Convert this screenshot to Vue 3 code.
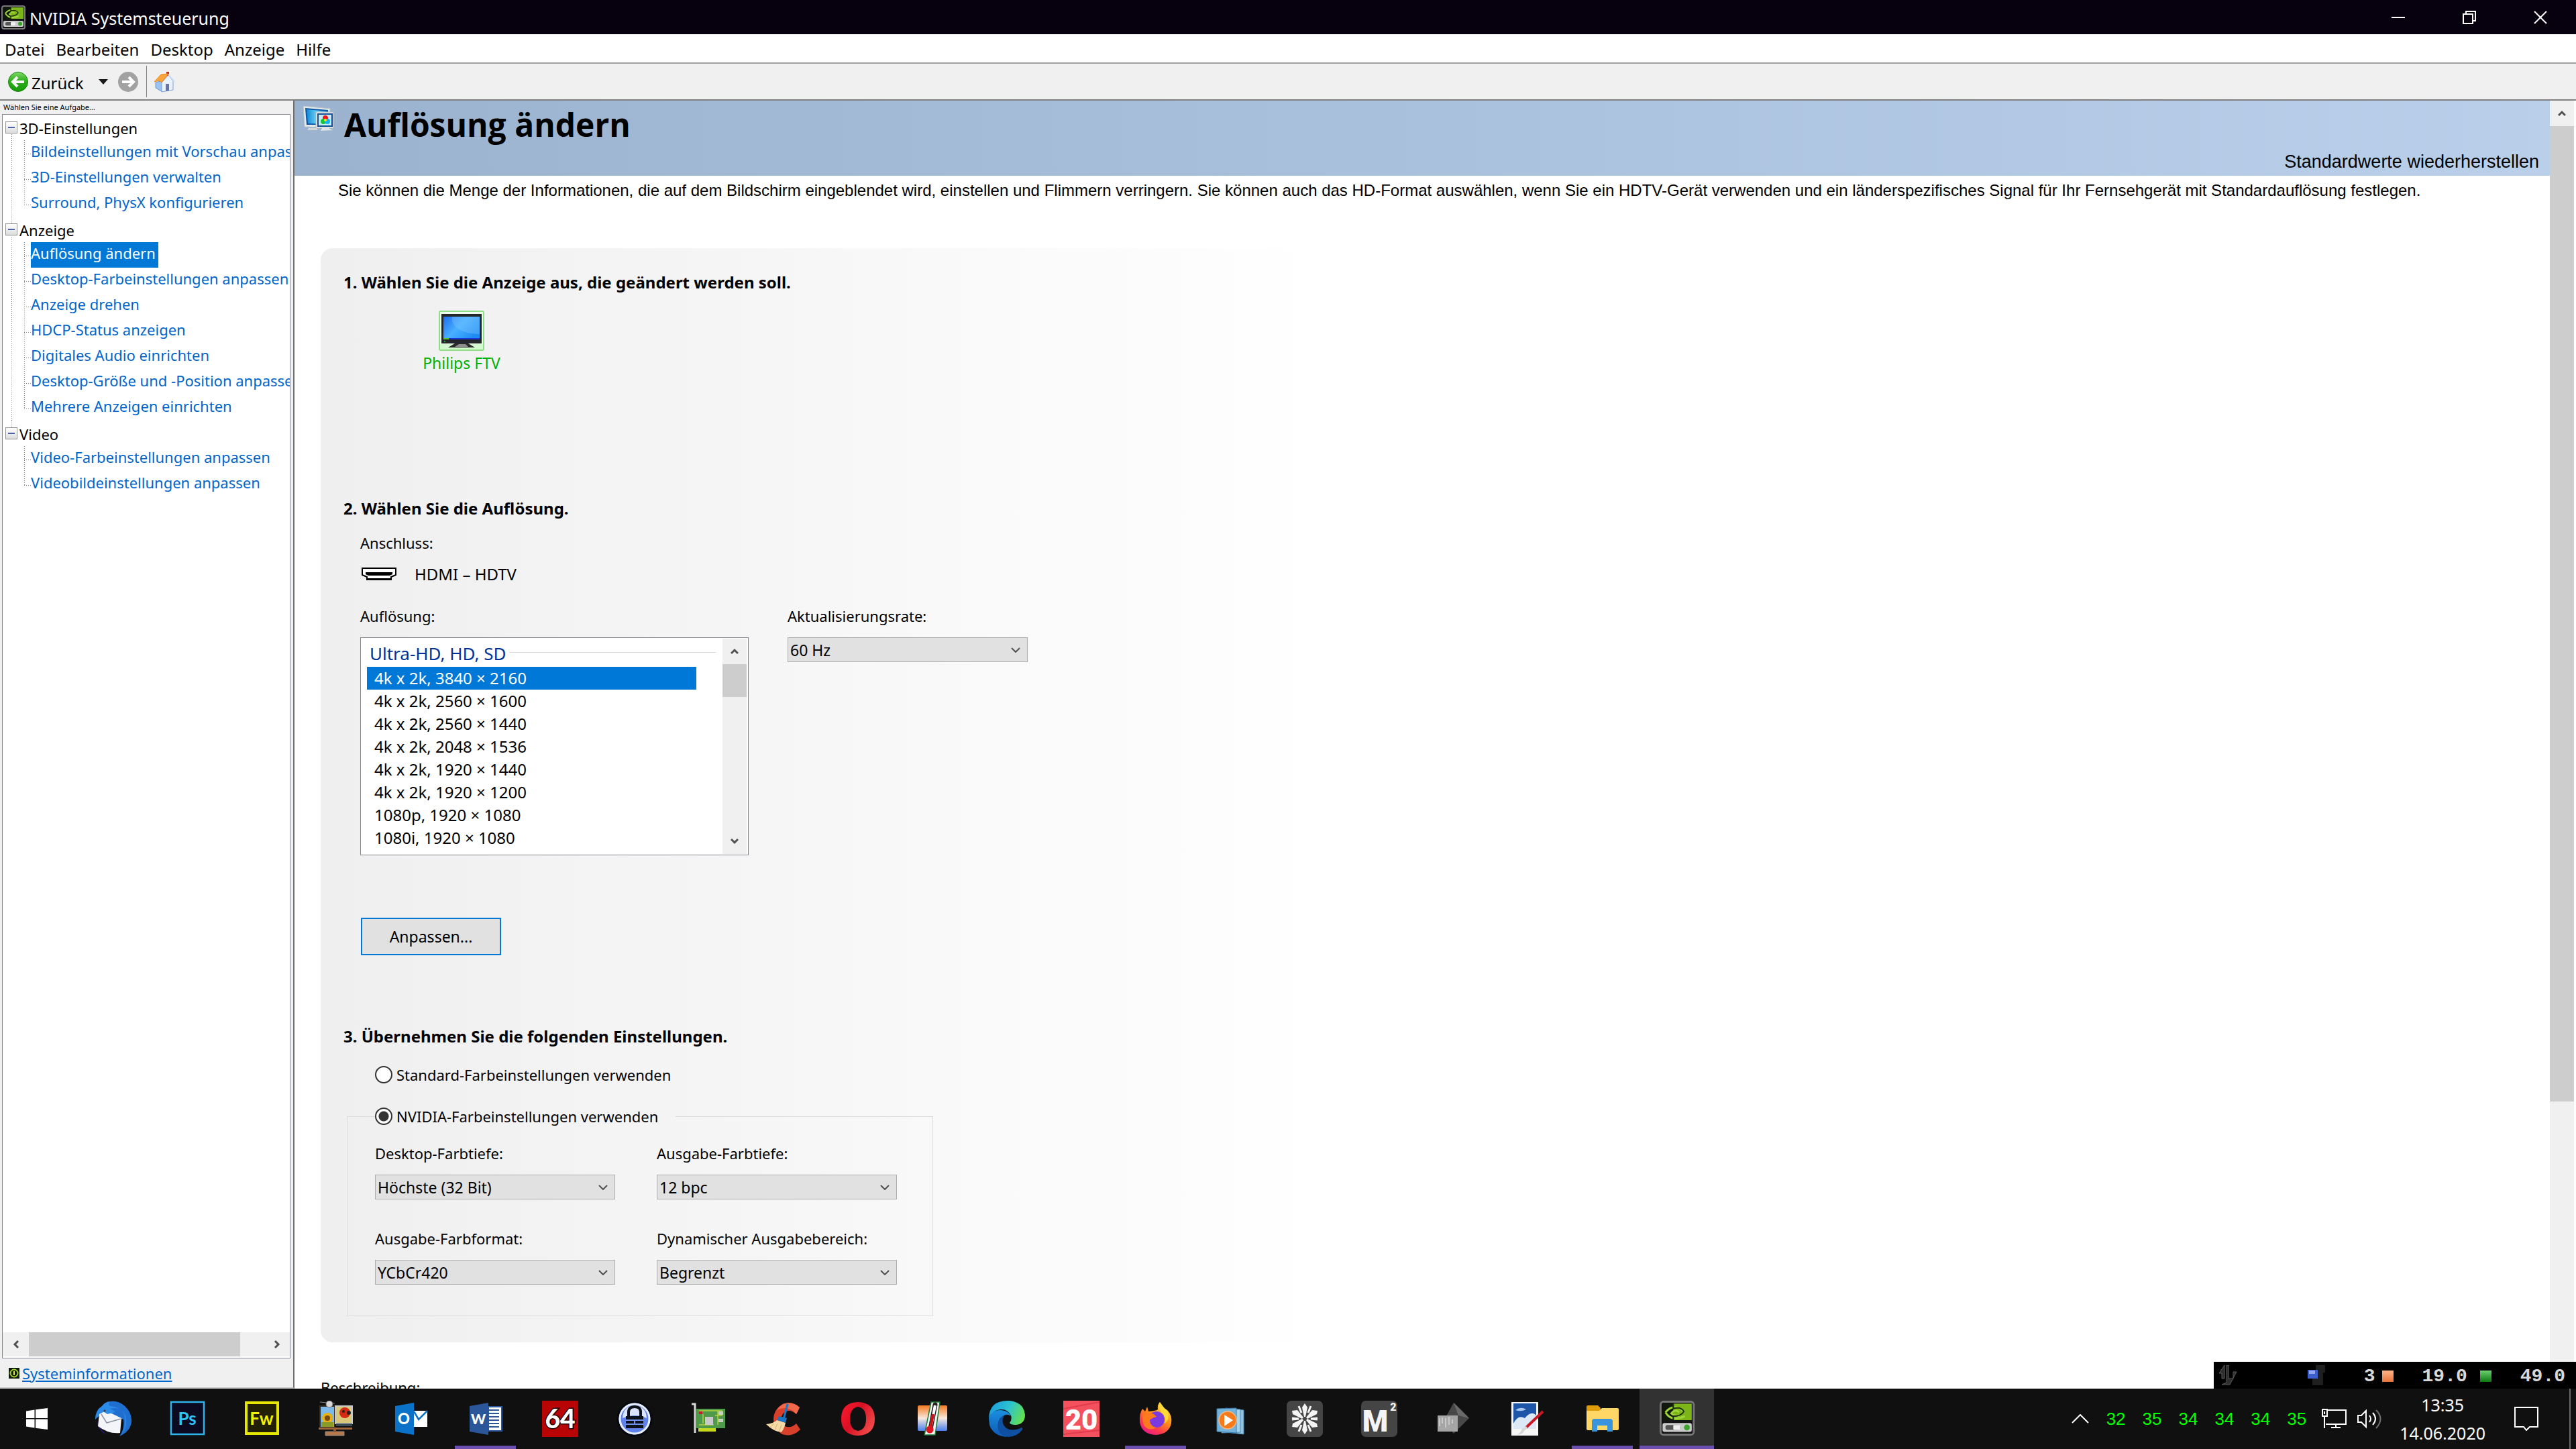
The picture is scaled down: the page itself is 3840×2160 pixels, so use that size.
<template>
  <div class="desktop">
    <header class="titlebar">
      <svg class="app-icon" viewBox="0 0 36 36" v-html="nvidiaIcon"></svg>
      <h1 class="window-title">NVIDIA Systemsteuerung</h1>
      <div class="window-controls">
        <button type="button" aria-label="Minimieren">
          <svg viewBox="0 0 20 20"><path d="M0 10H20" /></svg>
        </button>
        <button type="button" aria-label="Verkleinern">
          <svg viewBox="0 0 20 20"><path d="M1 5H15V19H1ZM5 5V1H19V15H15" /></svg>
        </button>
        <button type="button" aria-label="Schließen">
          <svg viewBox="0 0 20 20"><path d="M1 1L19 19M19 1L1 19" /></svg>
        </button>
      </div>
    </header>

    <nav class="menubar">
      <button v-for="entry in menu" :key="entry" type="button">{{ entry }}</button>
    </nav>

    <div class="toolbar">
      <button type="button" class="back">
        <svg viewBox="0 0 30 30">
          <defs>
            <linearGradient id="backGreen" x1="0" y1="0" x2="0" y2="1">
              <stop offset="0" stop-color="#7fd66a" />
              <stop offset="0.45" stop-color="#2fb01c" />
              <stop offset="1" stop-color="#159a08" />
            </linearGradient>
          </defs>
          <circle cx="15" cy="15" r="14.5" fill="url(#backGreen)" stroke="#158a0a" />
          <path d="M24 15H8M14 8L7 15L14 22" fill="none" stroke="#fff" stroke-width="4" />
        </svg>
        <span>Zurück</span>
      </button>
      <button type="button" class="history" aria-label="Verlauf">
        <svg viewBox="0 0 14 8"><path d="M0 0H14L7 8Z" fill="#1a1a1a" /></svg>
      </button>
      <button type="button" class="forward" aria-label="Vorwärts">
        <svg viewBox="0 0 30 30">
          <circle cx="15" cy="15" r="15" fill="#a2a2a2" />
          <path d="M6 15H22M16 8L23 15L16 22" fill="none" stroke="#fff" stroke-width="4" />
        </svg>
      </button>
      <span class="separator"></span>
      <button type="button" class="home" aria-label="Startseite">
        <svg viewBox="0 0 32 32">
          <path d="M3 17L13 14V31L3 25Z" fill="#9cc3ee" stroke="#6b96d0" />
          <path d="M12 31V17L22 6L29 15V28Z" fill="#e9f1fc" stroke="#7ba0d6" />
          <path d="M18 30V19H23V29Z" fill="#6673a8" />
          <path d="M19 1H23V7H19Z" fill="#c4301c" />
          <path d="M1 16L11 5L22 4L12 17L8 14Z" fill="#f7a53c" stroke="#e88a1c" />
          <path d="M22 5L31 16" stroke="#cfdcef" stroke-width="2" />
        </svg>
      </button>
    </div>

    <div class="workspace">
      <aside class="sidebar">
        <p class="task-hint">Wählen Sie eine Aufgabe...</p>
        <div class="tree-box">
          <ul class="tree">
            <li v-for="group in tree" :key="group.title" class="tree-group">
              <div class="tree-heading">
                <button type="button" class="toggle" :aria-label="group.title"></button>
                <span>{{ group.title }}</span>
              </div>
              <ul class="tree-items">
                <li v-for="item in group.items" :key="item">
                  <a href="#" :class="{ selected: item === activeItem }" @click.prevent="activeItem = item">{{ item }}</a>
                </li>
              </ul>
            </li>
          </ul>
          <div class="hscroll">
            <button type="button" aria-label="Links">
              <svg viewBox="0 0 10 12"><path d="M8 1L3 6L8 11" /></svg>
            </button>
            <div class="hscroll-track"><div class="hscroll-thumb"></div></div>
            <button type="button" aria-label="Rechts">
              <svg viewBox="0 0 10 12"><path d="M2 1L7 6L2 11" /></svg>
            </button>
          </div>
        </div>
        <div class="sysinfo">
          <svg viewBox="0 0 16 16">
            <rect width="16" height="16" fill="#101a08" />
            <circle cx="8" cy="8" r="5.5" fill="none" stroke="#9bd026" stroke-width="2" />
            <path d="M8 5V11M7 7H8" stroke="#d7ee4a" stroke-width="2" />
          </svg>
          <a href="#">Systeminformationen</a>
        </div>
      </aside>

      <main class="page">
        <div class="page-content">
          <div class="page-header">
            <svg class="page-icon" viewBox="0 0 46 38">
              <defs>
                <linearGradient id="screenCyan" x1="0" y1="0" x2="1" y2="0">
                  <stop offset="0" stop-color="#1287d8" />
                  <stop offset="0.6" stop-color="#7be0f8" />
                  <stop offset="1" stop-color="#2aa5e4" />
                </linearGradient>
              </defs>
              <path d="M0 0L40 4V32L2 31Z" fill="#e4eaec" stroke="#b9c3c8" />
              <path d="M3 3L37 6V28L5 28Z" fill="#0a57a6" />
              <path d="M5 5L35 8V27L7 26Z" fill="url(#screenCyan)" />
              <path d="M19 9H45V33H19Z" fill="#f2f4f5" stroke="#a9b2b6" />
              <path d="M22 12H43V30H22Z" fill="#c4ecfa" stroke="#134f94" stroke-width="2" />
              <circle cx="33" cy="18" r="4" fill="#f01414" />
              <circle cx="30" cy="23" r="4" fill="#18c832" />
              <circle cx="36" cy="23" r="4" fill="#12b4f0" />
              <circle cx="33" cy="21" r="2" fill="#ffe01a" />
              <path d="M28 33H38L44 36L26 37Z" fill="#dfe3e4" />
              <path d="M8 33H20L22 36L6 36Z" fill="#cfd6d8" />
            </svg>
            <h2>Auflösung ändern</h2>
            <button type="button" class="restore">Standardwerte wiederherstellen</button>
          </div>
          <p class="intro">
            Sie können die Menge der Informationen, die auf dem Bildschirm eingeblendet wird, einstellen und Flimmern verringern. Sie können auch das HD-Format auswählen, wenn Sie ein HDTV-Gerät verwenden und ein länderspezifisches Signal für Ihr Fernsehgerät mit Standardauflösung festlegen.
          </p>

          <div class="panel">
            <section class="step-display">
              <h3>1. Wählen Sie die Anzeige aus, die geändert werden soll.</h3>
              <button type="button" class="display">
                <svg viewBox="0 0 68 60">
                  <defs>
                    <linearGradient id="tvBlue" x1="0" y1="0" x2="1" y2="0.6">
                      <stop offset="0" stop-color="#1f6ff0" />
                      <stop offset="0.5" stop-color="#49b0ff" />
                      <stop offset="1" stop-color="#1f8cf5" />
                    </linearGradient>
                  </defs>
                  <rect x="1" y="1" width="66" height="58" rx="2" fill="#f2fdf1" stroke="#8fdd87" stroke-width="2" />
                  <path d="M2 50H66V58H2Z" fill="#d3f8cf" />
                  <rect x="4" y="5" width="60" height="44" fill="#23272a" />
                  <rect x="7" y="9" width="54" height="34" fill="url(#tvBlue)" />
                  <path d="M20 9C18 26 36 34 61 35V9Z" fill="#7cc6ff" opacity="0.4" />
                  <path d="M7 41H61V43H7Z" fill="#1b37d6" />
                  <path d="M7 41H15V43H7Z" fill="#58c322" />
                  <circle cx="9" cy="46" r="1" fill="#29c22b" />
                  <path d="M24 49H44L54 55H14Z" fill="#2a2a2a" />
                  <path d="M30 50H40L44 54H24Z" fill="#8e8e8e" />
                </svg>
                Philips FTV
              </button>
            </section>

            <section class="step-resolution">
              <h3>2. Wählen Sie die Auflösung.</h3>
              <p class="connector-label">Anschluss:</p>
              <p class="connector">
                <svg viewBox="0 0 52 20">
                  <path d="M1 1H51V11L44 14V18H8V14L1 11Z" fill="#fff" stroke="#000" stroke-width="2" />
                  <path d="M6 7H46V10L42 12H10L6 10Z" />
                  <path d="M8 16H44V19H8Z" />
                </svg>
                HDMI – HDTV
              </p>
              <div class="mode-row">
                <div class="field">
                  <span id="resolution-label">Auflösung:</span>
                  <div class="listbox">
                    <ul role="listbox" aria-labelledby="resolution-label">
                      <li class="list-group">Ultra-HD, HD, SD</li>
                      <li
                        v-for="mode in modes"
                        :key="mode"
                        role="option"
                        class="mode"
                        :class="{ selected: mode === activeMode }"
                        @click="activeMode = mode"
                      >{{ mode }}</li>
                    </ul>
                    <div class="list-scroll">
                      <button type="button" aria-label="Nach oben">
                        <svg viewBox="0 0 12 10"><path d="M1 8L6 3L11 8" /></svg>
                      </button>
                      <div class="list-thumb"></div>
                      <button type="button" aria-label="Nach unten">
                        <svg viewBox="0 0 12 10"><path d="M1 2L6 7L11 2" /></svg>
                      </button>
                    </div>
                  </div>
                </div>
                <div class="field">
                  <label for="rate">Aktualisierungsrate:</label>
                  <div class="combo">
                    <select id="rate"><option>60 Hz</option></select>
                    <svg viewBox="0 0 14 8"><path d="M1 1L7 7L13 1" /></svg>
                  </div>
                </div>
              </div>
              <button type="button" class="customize">Anpassen...</button>
            </section>

            <section class="step-color">
              <h3>3. Übernehmen Sie die folgenden Einstellungen.</h3>
              <label class="radio default-color">
                <input v-model="colorSource" type="radio" name="color" value="default" />
                Standard-Farbeinstellungen verwenden
              </label>
              <fieldset>
                <legend>
                  <label class="radio">
                    <input v-model="colorSource" type="radio" name="color" value="nvidia" />
                    NVIDIA-Farbeinstellungen verwenden
                  </label>
                </legend>
                <div class="color-grid">
                  <div v-for="setting in colorSettings" :key="setting.id" class="field">
                    <label :for="setting.id">{{ setting.label }}</label>
                    <div class="combo">
                      <select :id="setting.id"><option>{{ setting.value }}</option></select>
                      <svg viewBox="0 0 14 8"><path d="M1 1L7 7L13 1" /></svg>
                    </div>
                  </div>
                </div>
              </fieldset>
            </section>
          </div>
          <p class="description">Beschreibung:</p>
        </div>
        <div class="vscroll">
          <button type="button" aria-label="Nach oben">
            <svg viewBox="0 0 12 10"><path d="M1 8L6 3L11 8" /></svg>
          </button>
          <div class="vscroll-track"><div class="vscroll-thumb"></div></div>
        </div>
      </main>

      <div class="monitor-bar">
        <svg class="traffic" viewBox="0 0 28 30">
          <path d="M1 12L9 0V20H5V12ZM12 0H15V20H22V10H27L17 29H5L12 26Z" fill="#2e2e2e" stroke="#5a5a5a" />
        </svg>
        <svg class="net" viewBox="0 0 28 32">
          <path d="M13 1H27V12H24V31H8V16H13Z" fill="#1f1f1f" />
          <rect x="1" y="8" width="15" height="13" fill="#3f5fd0" />
          <rect x="3" y="9" width="9" height="5" fill="#90a6f2" />
        </svg>
        <span class="value processes">3</span>
        <i class="led orange"></i>
        <span class="value">19.0</span>
        <i class="led green"></i>
        <span class="value">49.0</span>
      </div>
    </div>

    <footer class="taskbar">
      <button
        v-for="app in apps"
        :key="app.name"
        type="button"
        class="task"
        :class="{ running: app.running, active: app.active }"
        :aria-label="app.name"
      >
        <svg viewBox="0 0 54 54" v-html="app.icon"></svg>
      </button>
      <div class="tray">
        <svg class="chevron" viewBox="0 0 26 14"><path d="M1 13L13 1L25 13" /></svg>
        <div class="temps">
          <span v-for="(temp, i) in temps" :key="i">{{ temp }}</span>
        </div>
        <svg class="network" viewBox="0 0 38 32">
          <path d="M8 3H36V24H6M21 24V29M14 29H28M1 2H8V12H1ZM4 12V30M4 5V9" />
        </svg>
        <svg class="speaker" viewBox="0 0 38 32">
          <path d="M1 11H6L13 4V28L6 21H1Z" />
          <path d="M18 11Q22 16 18 21M23 7Q31 16 23 25" />
          <path d="M28 3Q41 16 28 30" opacity="0.4" />
        </svg>
        <div class="clock">
          <span>13:35</span>
          <span>14.06.2020</span>
        </div>
        <svg class="notifications" viewBox="0 0 36 36">
          <path d="M1 1H35V30H23L18 35L14 30H1Z" />
        </svg>
        <span class="show-desktop"></span>
      </div>
    </footer>
  </div>
</template>

<script setup>
import { ref } from "vue";

const menu = ["Datei", "Bearbeiten", "Desktop", "Anzeige", "Hilfe"];

const tree = [
  {
    title: "3D-Einstellungen",
    items: [
      "Bildeinstellungen mit Vorschau anpassen",
      "3D-Einstellungen verwalten",
      "Surround, PhysX konfigurieren",
    ],
  },
  {
    title: "Anzeige",
    items: [
      "Auflösung ändern",
      "Desktop-Farbeinstellungen anpassen",
      "Anzeige drehen",
      "HDCP-Status anzeigen",
      "Digitales Audio einrichten",
      "Desktop-Größe und -Position anpassen",
      "Mehrere Anzeigen einrichten",
    ],
  },
  {
    title: "Video",
    items: ["Video-Farbeinstellungen anpassen", "Videobildeinstellungen anpassen"],
  },
];
const activeItem = ref("Auflösung ändern");

const modes = [
  "4k x 2k, 3840 × 2160",
  "4k x 2k, 2560 × 1600",
  "4k x 2k, 2560 × 1440",
  "4k x 2k, 2048 × 1536",
  "4k x 2k, 1920 × 1440",
  "4k x 2k, 1920 × 1200",
  "1080p, 1920 × 1080",
  "1080i, 1920 × 1080",
];
const activeMode = ref(modes[0]);

const colorSource = ref("nvidia");
const colorSettings = [
  { id: "desktop-depth", label: "Desktop-Farbtiefe:", value: "Höchste (32 Bit)" },
  { id: "output-depth", label: "Ausgabe-Farbtiefe:", value: "12 bpc" },
  { id: "output-format", label: "Ausgabe-Farbformat:", value: "YCbCr420" },
  { id: "output-range", label: "Dynamischer Ausgabebereich:", value: "Begrenzt" },
];

const temps = [32, 35, 34, 34, 34, 35];

const nvidiaIcon = `
  <rect x="1" y="1" width="34" height="34" rx="3" fill="#141414" stroke="#777" stroke-width="2"/>
  <path d="M3 3H33V20H3Z" fill="#10180a"/>
  <path d="M14 3H33V20H14Z" fill="#7cb518"/>
  <path d="M6 12Q14 2 25 11Q19 19 12 13Q16 8 20 12M6 12Q12 22 26 16" fill="none" stroke="#9fd63a" stroke-width="2"/>
  <path d="M14 3V8Q22 6 25 11Q22 16 14 16V20" fill="none" stroke="#1f3008" stroke-width="1.5"/>
  <rect x="3" y="23" width="30" height="9" rx="2" fill="#c9c9c9"/>
  <rect x="6" y="25" width="15" height="5" rx="2" fill="#555"/>
  <rect x="14" y="25" width="7" height="5" rx="1" fill="#eee"/>
  <circle cx="28" cy="27.500" r="3" fill="#3aa52a"/>`;

// taskbar glyphs, all drawn on a 54 x 54 grid
const apps = [
  {
    name: "Start",
    icon: `<path d="M11 15.500L23.500 13.500V26H11ZM25 13.300L43 11V26H25ZM11 27.500H23.500V40.500L11 38.500ZM25 27.500H43V43L25 40.800Z" fill="#fff"/>`,
  },
  {
    name: "Thunderbird",
    icon: `
      <path d="M20 2Q32 -2 44 8Q55 18 54 32Q52 46 36 53Q44 42 42 28L10 18Q12 6 20 2Z" fill="#1f6fd0"/>
      <path d="M0 28Q0 14 10 8Q14 2 22 1Q18 6 22 8Q34 8 42 18Q48 30 40 50Q50 34 44 20Q36 8 22 12L4 24Z" fill="#2a8be8"/>
      <path d="M2 30Q4 46 18 51Q8 44 6 38Z" fill="#2b1470"/>
      <path d="M6 20L16 15L39 26L37 48Q20 50 4 38Z" fill="#f4f5f8"/>
      <path d="M9 20L17 33L38 27" fill="none" stroke="#8e95a8" stroke-width="1.500"/>
      <path d="M12 16L18 20L30 17Q22 10 14 12Z" fill="#2a8be8"/>
      <circle cx="14" cy="15" r="1.500" fill="#5a2a10"/>`,
  },
  {
    name: "Photoshop",
    icon: `
      <rect x="2" y="2" width="49" height="48" fill="#0c0a20" stroke="#2fb4ea" stroke-width="2.500"/>
      <text x="26" y="36" text-anchor="middle" font-family="Lato" font-weight="700" font-size="26" fill="#2fc4f4">Ps</text>`,
  },
  {
    name: "Fireworks",
    icon: `
      <rect x="3" y="3" width="47" height="46" fill="#211f04" stroke="#e6e600" stroke-width="4"/>
      <text x="26" y="36" text-anchor="middle" font-family="Lato" font-weight="700" font-size="26" fill="#f2f200">Fw</text>`,
  },
  {
    name: "Bildbetrachter",
    icon: `
      <path d="M2 2L24 4M10 46H38V52H10Z" fill="#b5784a" stroke="#888"/>
      <path d="M22 40H26V47H22Z" fill="#8a5630"/>
      <path d="M2 8H24V40H2Z" fill="#7cb8e8" stroke="#3a2a1c" stroke-width="2"/>
      <circle cx="13" cy="26" r="8" fill="#e8b010"/>
      <circle cx="13" cy="26" r="4" fill="#7a4a08"/>
      <path d="M4 32H22V39H4Z" fill="#8a9a28"/>
      <path d="M25 8H50V34H25Z" fill="#d8c878" stroke="#c8c8c8" stroke-width="2"/>
      <circle cx="39" cy="18" r="8" fill="#d42a14"/>
      <circle cx="45" cy="18" r="3" fill="#222"/>
      <circle cx="37" cy="16" r="2" fill="#222"/>
      <path d="M26 34H50V38H26Z" fill="#3a4a58"/>
      <path d="M0 40H50V43H0Z" fill="#a0673c"/>
      <circle cx="16" cy="5" r="5" fill="#d8d8d8" stroke="#777"/>`,
  },
  {
    name: "Outlook",
    icon: `
      <path d="M3 8L31 3V51L3 46Z" fill="#0a72c8"/>
      <path d="M31 15H51V39H31Z" fill="#fff"/>
      <path d="M31 16L38 28L51 15" fill="none" stroke="#0a72c8" stroke-width="2.500"/>
      <text x="16" y="35" text-anchor="middle" font-family="Lato" font-weight="900" font-size="22" fill="#fff">O</text>`,
  },
  {
    name: "Word",
    running: true,
    icon: `
      <path d="M31 9H51V45H31Z" fill="#fff" stroke="#2b579a" stroke-width="2"/>
      <path d="M31 14H47M31 19H47M31 24H47M31 29H47M31 34H47M31 39H47" stroke="#2b579a" stroke-width="2"/>
      <path d="M3 8L31 3V51L3 46Z" fill="#2b579a"/>
      <text x="16" y="35" text-anchor="middle" font-family="Lato" font-weight="900" font-size="21" fill="#fff">W</text>`,
  },
  {
    name: "AIDA64",
    icon: `
      <rect width="54" height="54" fill="#b80404"/>
      <text x="27" y="41" text-anchor="middle" font-family="Lato" font-weight="900" font-size="39" fill="#fff" stroke="#200" stroke-width="3" paint-order="stroke">64</text>`,
  },
  {
    name: "KeePass",
    icon: `
      <circle cx="27" cy="27" r="25" fill="#a9bdf5" stroke="#05080f" stroke-width="3"/>
      <circle cx="27" cy="27" r="22" fill="#5f83ea" stroke="#e8eefc" stroke-width="3"/>
      <path d="M9 26Q10 8 27 7Q44 8 45 26Q28 18 9 26Z" fill="#dbe4fc"/>
      <path d="M18 25V17Q18 9 27 9Q36 9 36 17V25" fill="none" stroke="#0c1018" stroke-width="4"/>
      <path d="M14 23H40V41H14Z" fill="#0c1018"/>
      <path d="M14 29H40M14 35H40M27 29V35" stroke="#7090ec" stroke-width="2"/>`,
  },
  {
    name: "GPU-Z",
    icon: `
      <path d="M1 5H6V48" fill="none" stroke="#d8d8d8" stroke-width="3"/>
      <path d="M8 12H51V41H8Z" fill="#4f9a4a"/>
      <path d="M11 41H37V46H11Z" fill="#c6d820"/>
      <path d="M12 15H46V22H36M12 36H34M40 15V36M18 20V34" fill="none" stroke="#b8cf3a" stroke-width="1.500"/>
      <path d="M21 24H33V36H21Z" fill="#c9c9c9"/>
      <path d="M41 16H48V21H41ZM41 27H48V32H41Z" fill="#ccd0cc"/>
      <path d="M12 16H17V20H12Z" fill="#c02030"/>`,
  },
  {
    name: "CCleaner",
    icon: `
      <path d="M51 10Q40 0 26 5Q13 12 12 27Q12 42 25 50Q40 55 52 43L46 34Q38 42 29 38Q23 33 24 24Q27 14 37 15Q42 16 46 20Z" fill="#d8402c"/>
      <path d="M51 10Q40 0 26 5Q20 9 17 14Q34 6 46 20Z" fill="#f0694a"/>
      <path d="M33 5L27 28" stroke="#1c76c4" stroke-width="3"/>
      <path d="M20 23L32 26L30 33L17 29Z" fill="#1c76c4"/>
      <path d="M17 29L30 33Q28 42 24 47Q12 46 1 35Q12 34 17 29Z" fill="#f5d9a4"/>
      <path d="M12 34L8 40M18 34L14 44M24 36L20 46" stroke="#d8b070"/>`,
  },
  {
    name: "Opera",
    icon: `
      <defs><linearGradient id="operaRed" x1="0" y1="0" x2="1" y2="0.600">
        <stop offset="0" stop-color="#ff1a30"/><stop offset="0.500" stop-color="#d81024"/><stop offset="1" stop-color="#f04848"/>
      </linearGradient></defs>
      <path fill-rule="evenodd" d="M27 2Q52 3 52 27Q52 51 27 52Q2 51 2 27Q2 3 27 2ZM27 9Q15 11 15 27Q15 43 27 45Q39 43 39 27Q39 11 27 9Z" fill="url(#operaRed)"/>`,
  },
  {
    name: "Core Temp",
    icon: `
      <defs><linearGradient id="heat" x1="0" y1="0" x2="0" y2="1">
        <stop offset="0" stop-color="#f47820"/><stop offset="0.5" stop-color="#f8e8dc"/><stop offset="1" stop-color="#4a80f0"/>
      </linearGradient></defs>
      <rect x="5" y="7" width="44" height="38" rx="2" fill="url(#heat)"/>
      <path d="M25 2H38L31 51H15Z" fill="#f4f4f0" stroke="#1d7a34" stroke-width="1.500"/>
      <path d="M31 6L24 42" stroke="#222" stroke-width="7" stroke-linecap="round"/>
      <path d="M31 7L24 42" stroke="#fff" stroke-width="4"/>
      <path d="M28 20L24 42" stroke="#d01018" stroke-width="4"/>
      <circle cx="23" cy="43" r="5.500" fill="#e01420"/>`,
  },
  {
    name: "Edge",
    icon: `
      <defs>
        <linearGradient id="edgeTop" x1="0" y1="0.300" x2="1" y2="0.600">
          <stop offset="0" stop-color="#1a9bdc"/><stop offset="0.500" stop-color="#2cc3d2"/><stop offset="1" stop-color="#66e04a"/>
        </linearGradient>
        <linearGradient id="edgeLow" x1="0" y1="0" x2="0" y2="1">
          <stop offset="0" stop-color="#1b8fe0"/><stop offset="1" stop-color="#0c59b4"/>
        </linearGradient>
      </defs>
      <path d="M0 26Q1 0 28 0Q52 1 54 21Q54 35 40 36Q32 36 31 33Q35 28 33 22Q28 12 17 13Q4 15 0 26Z" fill="url(#edgeTop)"/>
      <path d="M0 26Q4 14 18 14Q30 15 33 23Q26 18 20 24Q14 32 22 42Q30 52 26 54Q6 52 1 36Z" fill="url(#edgeLow)"/>
      <path d="M23 22Q17 32 25 40Q34 47 49 40Q51 41 50 43Q42 54 29 54Q10 50 14 32Q16 24 23 22Z" fill="#1050a0"/>`,
  },
  {
    name: "Wetter",
    icon: `
      <rect width="54" height="54" fill="#f4505e"/>
      <path d="M0 12L54 2M0 50L54 44" stroke="#e03c4c" stroke-width="2"/>
      <text x="27" y="43" text-anchor="middle" font-family="Roboto" font-weight="900" font-size="42" fill="#fff">20</text>`,
  },
  {
    name: "Firefox",
    running: true,
    icon: `
      <defs>
        <linearGradient id="foxFire" x1="0.800" y1="0" x2="0.200" y2="1">
          <stop offset="0" stop-color="#ffe840"/><stop offset="0.450" stop-color="#ff8a18"/><stop offset="0.750" stop-color="#ff3750"/><stop offset="1" stop-color="#e01890"/>
        </linearGradient>
      </defs>
      <path d="M33 2Q36 10 44 14Q52 22 50 34Q46 50 27 51Q6 50 3 32Q2 20 7 12L11 16L14 9L16 16Q28 15 30 13Q29 6 33 2Z" fill="url(#foxFire)"/>
      <circle cx="28" cy="28" r="12" fill="#7a3ae0"/>
      <path d="M7 20Q16 16 24 20L28 24Q20 26 18 29Q18 38 28 40Q18 46 10 38Q6 30 7 20Z" fill="#ff7a1c"/>
      <path d="M33 2Q30 14 38 20Q42 26 40 34Q48 28 45 16Q38 10 33 2Z" fill="#ffd83a"/>`,
  },
  {
    name: "Media Player",
    icon: `
      <path d="M20 11L47 14V50L20 47Z" fill="#8fc4e4" stroke="#4a88b0"/>
      <path d="M14 12L42 13V47L14 48Z" fill="#a8d4ec" stroke="#4a88b0"/>
      <path d="M7 12L36 11V48L7 46Z" fill="#74b4dc" stroke="#3a7aa8"/>
      <circle cx="23" cy="29" r="13" fill="#f47a1c" stroke="#f8b880" stroke-width="1.500"/>
      <path d="M18 21V38L31 29Z" fill="#fff"/>`,
  },
  {
    name: "Snowflake",
    icon: `
      <rect width="54" height="54" rx="7" fill="#454545"/>
      <g fill="#f4f4f4">
        <path d="M27 4L31 10L28 24H26L23 10ZM27 50L31 44L28 30H26L23 44Z"/>
        <path d="M8 15L16 14L25 25L23 27L9 20ZM46 15L38 14L29 25L31 27L45 20Z"/>
        <path d="M8 39L16 40L25 29L23 27L9 34ZM46 39L38 40L29 29L31 27L45 34Z"/>
      </g>
      <path d="M18 8L22 18M36 8L32 18M18 46L22 36M36 46L32 36M8 26L18 27L8 28M46 26L36 27L46 28" fill="none" stroke="#f4f4f4" stroke-width="3"/>`,
  },
  {
    name: "M2",
    icon: `
      <rect width="54" height="54" rx="7" fill="#454545"/>
      <text x="21" y="46" text-anchor="middle" font-family="Roboto" font-weight="900" font-size="44" fill="#f4f4f4">M</text>
      <text x="48" y="15" text-anchor="middle" font-family="Roboto" font-weight="900" font-size="16" fill="#f4f4f4">2</text>`,
  },
  {
    name: "Cube",
    icon: `
      <path d="M27 3L50 26L27 49L12 30Z" fill="#484848"/>
      <path d="M27 3L50 26L34 22Z" fill="#6a6a6a"/>
      <path d="M3 22H33V46H3Z" fill="#a6a6a6"/>
      <path d="M6 26V38M10 25V34M15 26V40M20 24V36M25 28V34" stroke="#c8c8c8" stroke-width="2"/>`,
  },
  {
    name: "Paint",
    icon: `
      <rect x="2" y="2" width="40" height="50" fill="#f6f6f6"/>
      <rect x="5" y="4" width="34" height="38" fill="#1d56a8"/>
      <path d="M5 34Q12 20 22 26Q32 14 39 22V42H5Z" fill="#dce8f6"/>
      <path d="M8 14Q16 8 24 13Q16 17 8 14Z" fill="#a8c8ec"/>
      <path d="M49 16L24 40" stroke="#c81824" stroke-width="4"/>
      <path d="M24 38L18 42Q14 50 10 50Q18 52 22 44L26 41Z" fill="#d8d8d8"/>`,
  },
  {
    name: "Explorer",
    running: true,
    icon: `
      <path d="M3 9Q3 7 5 7H20L24 11V18H3Z" fill="#e09c08"/>
      <path d="M3 15H22L26 11H49Q51 11 51 13V42Q51 44 49 44H5Q3 44 3 42Z" fill="#ffd766"/>
      <path d="M11 46V31Q11 27 15 27H38Q42 27 42 31V46H34V37H19V46Z" fill="#3a94dc"/>`,
  },
  {
    name: "NVIDIA Systemsteuerung",
    running: true,
    active: true,
    icon: `<g transform="translate(1 0) scale(1.450)">${nvidiaIcon}</g>`,
  },
];
</script>

<style>
body {
  overflow: hidden;
}
</style>

<style scoped>
.desktop {
  display: flex;
  flex-direction: column;
  height: 100vh;
  overflow: hidden;
  background: #f0f0f0;
  color: #000;
  font-family: "Noto Sans", sans-serif;
  font-size: 22px;
  line-height: 30px;
}
button {
  margin: 0;
  padding: 0;
  border: 0;
  background: none;
  color: inherit;
  font: inherit;
}
h1,
h2,
h3,
p,
ul {
  margin: 0;
  padding: 0;
}
ul {
  list-style: none;
}
svg {
  display: block;
  flex: none;
}

/* title bar */
.titlebar {
  display: flex;
  align-items: center;
  height: 51px;
  background: #06000f;
  color: #fff;
}
.app-icon {
  width: 36px;
  height: 36px;
  margin: 0 6px 0 2px;
}
.window-title {
  padding-top: 3px;
  font-size: 25px;
  font-weight: 400;
}
.window-controls {
  display: flex;
  margin-left: auto;
}
.window-controls button {
  display: grid;
  place-items: center;
  width: 106px;
  height: 48px;
}
.window-controls svg {
  width: 20px;
  height: 20px;
  fill: none;
  stroke: #fff;
  stroke-width: 2;
}

/* menu and toolbar */
.menubar {
  display: flex;
  gap: 17px;
  height: 42px;
  padding-left: 7px;
  background: #fff;
}
.menubar button {
  padding-top: 4px;
  font-size: 24px;
}
.toolbar {
  display: flex;
  align-items: center;
  height: 53px;
  border-top: 2px solid #a0a0a0;
  border-bottom: 2px solid #808080;
  padding-left: 12px;
}
.back {
  display: flex;
  align-items: center;
  gap: 5px;
  font-size: 24px;
}
.back span {
  padding-top: 4px;
}
.back svg,
.forward svg {
  width: 30px;
  height: 30px;
}
.history {
  margin: 0 15px 0 22px;
}
.history svg {
  width: 14px;
  height: 8px;
}
.separator {
  width: 1px;
  height: 47px;
  margin: 0 10px 0 12px;
  background: #808080;
}
.home svg {
  width: 32px;
  height: 32px;
}

/* sidebar */
.workspace {
  display: flex;
  flex: 1;
  min-height: 0;
  position: relative;
}
.sidebar {
  display: flex;
  flex-direction: column;
  flex: none;
  box-sizing: border-box;
  width: 439px;
  border-right: 2px solid #707070;
  border-bottom: 2px solid #c8c8c8;
}
.task-hint {
  height: 20px;
  padding-left: 5px;
  font-size: 11px;
  line-height: 19px;
}
.tree-box {
  display: flex;
  flex: 1;
  flex-direction: column;
  margin: 0 4px 0 3px;
  border: 1px solid #828790;
  background: #fff;
}
.tree {
  flex: 1;
}
.tree-group {
  background: repeating-linear-gradient(#888 0 1px, transparent 1px 3px) 13px 0 / 1px 100% no-repeat;
}
.tree-group:first-child {
  background-position: 13px 20px;
}
.tree-group:last-child {
  background-size: 1px 20px;
}
.tree-heading {
  display: flex;
  align-items: center;
  gap: 3px;
  height: 38px;
  padding-left: 4px;
}
.toggle {
  display: grid;
  place-items: center;
  width: 18px;
  height: 18px;
  box-sizing: border-box;
  border: 1px solid #919191;
  background: linear-gradient(#fff, #dcdcdc);
}
.toggle::before {
  width: 10px;
  height: 2px;
  background: #4b63a7;
  content: "";
}
.tree-heading span {
  padding-top: 2px;
}
.tree-items {
  background: repeating-linear-gradient(#888 0 1px, transparent 1px 3px) 32px 0 / 1px calc(100% - 18px) no-repeat;
}
.tree-items li {
  height: 38px;
  padding-left: 42px;
  overflow: hidden;
  background: repeating-linear-gradient(90deg, #888 0 1px, transparent 1px 3px) 32px 20px / 10px 1px no-repeat;
  line-height: 32px;
  white-space: nowrap;
}
.tree-items a {
  display: inline-block;
  height: 38px;
  padding-right: 4px;
  color: #0066cc;
  text-decoration: none;
}
.tree-items a.selected {
  background: #0078d7;
  color: #fff;
}
.hscroll {
  display: flex;
  height: 36px;
  margin-bottom: 2px;
  background: #f0f0f0;
}
.hscroll button {
  display: grid;
  place-items: center;
  width: 39px;
}
.hscroll svg {
  width: 10px;
  height: 12px;
  fill: none;
  stroke: #505050;
  stroke-width: 3;
}
.hscroll-track {
  flex: 1;
}
.hscroll-thumb {
  width: 90%;
  height: 100%;
  background: #cdcdcd;
}
.sysinfo {
  display: flex;
  align-items: center;
  gap: 4px;
  height: 43px;
  padding-left: 13px;
}
.sysinfo svg {
  width: 16px;
  height: 16px;
}
.sysinfo a {
  color: #0066cc;
}

/* page */
.page {
  display: flex;
  flex: 1;
  min-width: 0;
  background: #fff;
}
.page-content {
  flex: 1;
  min-width: 0;
  overflow: hidden;
}
.page-header {
  display: flex;
  height: 112px;
  padding: 0 16px 0 13px;
  background: linear-gradient(90deg, #9bb3cf, #b9cfea);
}
.page-icon {
  width: 46px;
  height: 38px;
  margin: 8px 15px 0 0;
}
.page-header h2 {
  padding-top: 9px;
  font-family: "Open Sans", sans-serif;
  font-size: 48px;
  font-weight: 700;
  line-height: 54px;
}
.restore {
  align-self: flex-end;
  margin: 0 0 6px auto;
  font-family: "Liberation Sans", sans-serif;
  font-size: 27px;
}
.intro {
  padding: 7px 0 0 65px;
  font-family: "Liberation Sans", sans-serif;
  font-size: 24px;
}
.panel {
  margin: 71px 24px 0 39px;
  padding: 36px 0 39px;
  border-radius: 18px;
  background: linear-gradient(90deg, #efefef, #fff 1500px);
}
.panel h3 {
  padding-left: 34px;
  font-size: 24px;
  font-weight: 700;
}
.step-display {
  padding-bottom: 187px;
}
.display {
  display: flex;
  flex-direction: column;
  align-items: center;
  gap: 3px;
  width: 116px;
  margin: 27px 0 0 152px;
  color: #00b000;
  font-size: 23px;
  white-space: nowrap;
}
.display svg {
  width: 68px;
  height: 60px;
}
.step-resolution {
  padding-bottom: 106px;
}
.connector-label {
  padding: 21px 0 17px 59px;
}
.connector {
  display: flex;
  align-items: center;
  gap: 27px;
  padding: 0 0 32px 61px;
  font-size: 24px;
}
.connector svg {
  width: 52px;
  height: 20px;
}
.mode-row {
  display: flex;
  gap: 58px;
  padding-left: 59px;
}
.field {
  display: flex;
  flex-direction: column;
  gap: 17px;
}
.listbox {
  display: flex;
  width: 577px;
  border: 1px solid #828790;
  background: #fff;
  font-size: 24px;
}
.listbox ul {
  flex: 1;
  padding: 6px 0 8px 9px;
  line-height: 34px;
}
.list-group {
  display: flex;
  align-items: center;
  gap: 5px;
  margin-bottom: 3px;
  padding: 0 10px 0 4px;
  color: #003399;
  font-size: 26px;
}
.list-group::after {
  flex: 1;
  height: 1px;
  margin-bottom: 4px;
  background: #dcdcdc;
  content: "";
}
.mode {
  height: 34px;
  margin-right: 39px;
  padding-left: 11px;
}
.mode.selected {
  background: #0078d7;
  color: #fff;
}
.list-scroll {
  display: flex;
  flex-direction: column;
  width: 36px;
  margin: 1px 2px 1px 0;
  background: #f0f0f0;
}
.list-scroll button,
.vscroll button {
  display: grid;
  place-items: center;
  height: 38px;
}
.list-scroll svg,
.vscroll svg {
  width: 12px;
  height: 10px;
  fill: none;
  stroke: #505050;
  stroke-width: 3;
}
.list-thumb {
  height: 49px;
  margin-bottom: auto;
  background: #cdcdcd;
}
.combo {
  display: grid;
  align-items: center;
  width: 358px;
}
.combo select,
.combo svg {
  grid-area: 1 / 1;
}
.combo select {
  height: 37px;
  padding: 0 40px 0 3px;
  border: 1px solid #adadad;
  border-radius: 0;
  appearance: none;
  background: #e1e1e1;
  color: #000;
  font-family: inherit;
  font-size: 23px;
}
.combo svg {
  justify-self: end;
  width: 14px;
  height: 8px;
  margin-right: 11px;
  fill: none;
  stroke: #505050;
  stroke-width: 2;
  pointer-events: none;
}
.customize {
  width: 209px;
  height: 56px;
  margin: 93px 0 0 60px;
  border: 2px solid #0078d7;
  background: #e1e1e1;
  font-size: 23px;
}
.radio {
  display: flex;
  align-items: center;
  gap: 6px;
}
.radio input {
  width: 26px;
  height: 26px;
  margin: 0;
  border: 2px solid #333;
  border-radius: 50%;
  appearance: none;
  background: #fff;
}
.radio input:checked {
  background: radial-gradient(circle, #333 7px, #fff 8px);
}
.default-color {
  padding: 27px 0 32px 81px;
}
.step-color fieldset {
  width: 874px;
  box-sizing: border-box;
  margin: 0 0 0 39px;
  padding: 25px 0 46px 41px;
  border: 1px solid #dcdcdc;
}
.step-color legend {
  padding: 0 26px 0 0;
}
.color-grid {
  display: grid;
  grid-template-columns: 358px 358px;
  gap: 43px 62px;
}
.description {
  padding: 52px 0 0 39px;
}
.vscroll {
  display: flex;
  flex-direction: column;
  width: 36px;
  margin-right: 1px;
  border-right: 2px solid #fff;
  background: #f0f0f0;
}
.vscroll-track {
  display: grid;
  flex: 1;
  grid-template-rows: 17fr 5fr;
}
.vscroll-thumb {
  background: #cdcdcd;
}

/* hardware readout over the lower right corner */
.monitor-bar {
  position: absolute;
  right: 0;
  bottom: 0;
  display: flex;
  align-items: center;
  box-sizing: border-box;
  height: 40px;
  padding: 0 16px 0 7px;
  background: #000;
  color: #d8d8d8;
  font-family: "Liberation Mono", monospace;
  font-size: 28px;
  font-weight: 700;
}
.value {
  padding-top: 4px;
}
.traffic {
  width: 28px;
  height: 30px;
  margin-right: 104px;
}
.net {
  width: 28px;
  height: 32px;
}
.processes {
  margin-left: 57px;
}
.led {
  width: 17px;
  height: 17px;
  margin: 2px 43px 0 10px;
}
.led.orange {
  background: linear-gradient(#ffb48a, #e8743c);
}
.led.green {
  margin-left: 19px;
  background: linear-gradient(#6ed070, #0c7a10);
}

/* taskbar */
.taskbar {
  display: flex;
  height: 90px;
  background: #101010;
  color: #fff;
}
.task {
  display: flex;
  flex-direction: column;
  align-items: center;
  justify-content: flex-end;
  gap: 13px;
  width: 111px;
}
.task:first-child {
  padding: 0 4px 0 0;
  width: 113px;
}
.task svg {
  width: 54px;
  height: 54px;
}
.task::after {
  width: 91px;
  height: 5px;
  content: "";
}
.task.running::after {
  background: #6b4fb0;
}
.task.active {
  background: #323232;
}
.task.active::after {
  width: 100%;
}
.tray {
  display: flex;
  align-items: center;
  margin-left: auto;
}
.tray svg {
  fill: none;
  stroke: #fff;
  stroke-width: 2;
}
.chevron {
  width: 26px;
  height: 14px;
  margin-right: 26px;
}
.temps {
  display: flex;
  gap: 25px;
  margin-right: 23px;
  color: #00ff00;
  font-family: "Liberation Sans", sans-serif;
  font-size: 26px;
}
.network {
  width: 38px;
  height: 32px;
  margin-right: 15px;
}
.speaker {
  width: 38px;
  height: 32px;
  margin-right: 25px;
}
.clock {
  display: flex;
  flex-direction: column;
  align-items: center;
  gap: 12px;
  font-size: 25px;
}
.notifications {
  width: 36px;
  height: 36px;
  margin: 0 46px 0 43px;
}
.show-desktop {
  align-self: stretch;
  width: 8px;
  border-left: 2px solid #6a6a6a;
}
</style>
